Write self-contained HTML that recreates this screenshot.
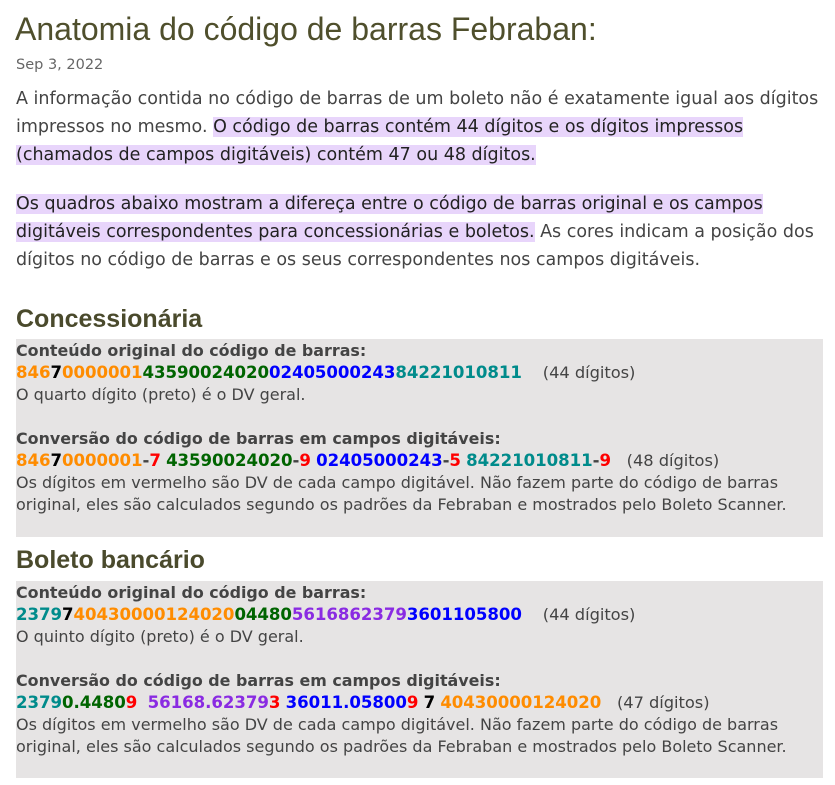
<!DOCTYPE html>
<html><head><meta charset="utf-8"><style>
body{margin:0;background:#fff;font-family:"DejaVu Sans","Liberation Sans",sans-serif;color:#444;width:835px;height:785px;overflow:hidden;position:relative}
.a{position:absolute;left:16px;white-space:nowrap}
h1{position:absolute;left:15px;top:11px;margin:0;font-family:"Liberation Sans",sans-serif;font-weight:normal;font-size:32px;color:#4f4f2c}
.date{top:57px;font-size:14.5px;color:#666}
.p{font-size:17.5px;line-height:28px;color:#444}
.hl{background:#e8d5fb;color:#222}
h2{position:absolute;left:16px;margin:0;font-family:"Liberation Sans",sans-serif;font-size:25px;font-weight:bold;color:#4a4a2c}
.box{position:absolute;left:16px;width:807px;background:#e6e4e4}
.box div{position:absolute;left:0;white-space:nowrap;font-size:16px;line-height:22px}
b{color:#444;font-size:15.9px}
.box div.n{font-size:16.6px;letter-spacing:-0.05px}
.o{color:#ff8c00;font-weight:bold}.k{color:#000;font-weight:bold}.g{color:#006400;font-weight:bold}.bl{color:#0000ff;font-weight:bold}.t{color:#008b8b;font-weight:bold}.pu{color:#8a2be2;font-weight:bold}.r{color:#ff0000;font-weight:bold}.d{color:#444;font-weight:bold}
.c{font-size:16.3px}
</style></head><body>
<h1>Anatomia do código de barras Febraban:</h1>
<div class="a date">Sep 3, 2022</div>
<div class="a p" style="top:85px">A informação contida no código de barras de um boleto não é exatamente igual aos dígitos<br>impressos no mesmo. <span class="hl">O código de barras contém 44 dígitos e os dígitos impressos</span><br><span class="hl">(chamados de campos digitáveis) contém 47 ou 48 dígitos.</span></div>
<div class="a p" style="top:190px"><span class="hl">Os quadros abaixo mostram a difereça entre o código de barras original e os campos</span><br><span class="hl">digitáveis correspondentes para concessionárias e boletos.</span> As cores indicam a posição dos<br>dígitos no código de barras e os seus correspondentes nos campos digitáveis.</div>
<h2 style="top:305px">Concessionária</h2>
<div class="box" style="top:339px;height:198px">
<div style="top:1px"><b>Conteúdo original do código de barras:</b></div>
<div style="top:23px" class="n"><span class="o">846</span><span class="k">7</span><span class="o">0000001</span><span class="g">43590024020</span><span class="bl">02405000243</span><span class="t">84221010811</span> &nbsp;&nbsp; <span class="c">(44 dígitos)</span></div>
<div style="top:45px">O quarto dígito (preto) é o DV geral.</div>
<div style="top:89px"><b>Conversão do código de barras em campos digitáveis:</b></div>
<div style="top:111px" class="n"><span class="o">846</span><span class="k">7</span><span class="o">0000001</span><span class="d">-</span><span class="r">7</span> <span class="g">43590024020</span><span class="d">-</span><span class="r">9</span> <span class="bl">02405000243</span><span class="d">-</span><span class="r">5</span> <span class="t">84221010811</span><span class="d">-</span><span class="r">9</span> &nbsp; <span class="c">(48 dígitos)</span></div>
<div style="top:133px">Os dígitos em vermelho são DV de cada campo digitável. Não fazem parte do código de barras<br>original, eles são calculados segundo os padrões da Febraban e mostrados pelo Boleto Scanner.</div>
</div>
<h2 style="top:546px">Boleto bancário</h2>
<div class="box" style="top:581px;height:197px">
<div style="top:1px"><b>Conteúdo original do código de barras:</b></div>
<div style="top:23px" class="n"><span class="t">2379</span><span class="k">7</span><span class="o">40430000124020</span><span class="g">04480</span><span class="pu">5616862379</span><span class="bl">3601105800</span> &nbsp;&nbsp; <span class="c">(44 dígitos)</span></div>
<div style="top:45px">O quinto dígito (preto) é o DV geral.</div>
<div style="top:89px"><b>Conversão do código de barras em campos digitáveis:</b></div>
<div style="top:111px" class="n"><span class="t">2379</span><span class="g">0.4480</span><span class="r">9</span> &nbsp;<span class="pu">56168.62379</span><span class="r">3</span> <span class="bl">36011.05800</span><span class="r">9</span> <span class="k">7</span> <span class="o">40430000124020</span> &nbsp; <span class="c">(47 dígitos)</span></div>
<div style="top:133px">Os dígitos em vermelho são DV de cada campo digitável. Não fazem parte do código de barras<br>original, eles são calculados segundo os padrões da Febraban e mostrados pelo Boleto Scanner.</div>
</div>
</body></html>
